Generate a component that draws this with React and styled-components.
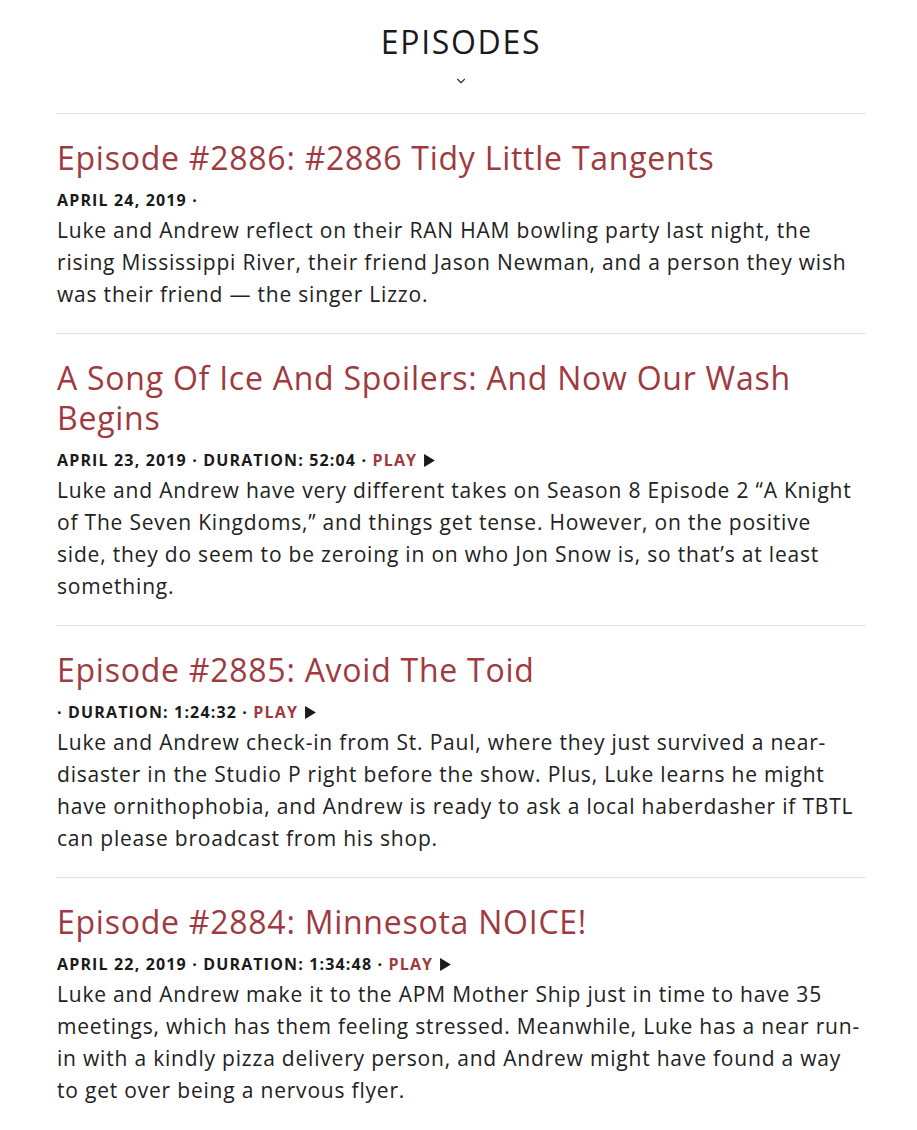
import React from "react";
import styled, { createGlobalStyle } from "styled-components";
import { ChevronDown } from "lucide-react";

const RED = "#9e3a40";

const episodes = [
  {
    title: "Episode #2886: #2886 Tidy Little Tangents",
    date: "APRIL 24, 2019",
    duration: null,
    text: "Luke and Andrew reflect on their RAN HAM bowling party last night, the rising Mississippi River, their friend Jason Newman, and a person they wish was their friend — the singer Lizzo.",
  },
  {
    title: "A Song Of Ice And Spoilers: And Now Our Wash Begins",
    date: "APRIL 23, 2019",
    duration: "52:04",
    text: "Luke and Andrew have very different takes on Season 8 Episode 2 “A Knight of The Seven Kingdoms,” and things get tense. However, on the positive side, they do seem to be zeroing in on who Jon Snow is, so that’s at least something.",
  },
  {
    title: "Episode #2885: Avoid The Toid",
    date: "",
    duration: "1:24:32",
    text: "Luke and Andrew check-in from St. Paul, where they just survived a near-disaster in the Studio P right before the show. Plus, Luke learns he might have ornithophobia, and Andrew is ready to ask a local haberdasher if TBTL can please broadcast from his shop.",
  },
  {
    title: "Episode #2884: Minnesota NOICE!",
    date: "APRIL 22, 2019",
    duration: "1:34:48",
    text: "Luke and Andrew make it to the APM Mother Ship just in time to have 35 meetings, which has them feeling stressed. Meanwhile, Luke has a near run-in with a kindly pizza delivery person, and Andrew might have found a way to get over being a nervous flyer.",
  },
];

function App() {
  return (
    <Page>
      <GlobalStyle />
      <Header>
        <Heading>EPISODES</Heading>
        <Toggle>
          <ChevronDown size={14} strokeWidth={2} />
        </Toggle>
      </Header>
      <List>
        {episodes.map((ep) => (
          <Episode key={ep.title}>
            <Title>{ep.title}</Title>
            <Meta>
              {ep.date} ·
              {ep.duration && (
                <>
                  {" "}DURATION: {ep.duration} · <Play>PLAY</Play>
                  <Arrow viewBox="0 0 10 12">
                    <path d="M0 0 L10 6 L0 12 Z" />
                  </Arrow>
                </>
              )}
            </Meta>
            <Text>{ep.text}</Text>
          </Episode>
        ))}
      </List>
    </Page>
  );
}
export default App;

const GlobalStyle = createGlobalStyle`
  body {
    margin: 0;
    background: #fff;
    color: #222;
    font-family: "Open Sans", "Liberation Sans", sans-serif;
  }
`;

const Page = styled.div`
  padding: 0 51px 0 56px;
`;

const Header = styled.header`
  display: flex;
  flex-direction: column;
  align-items: center;
  padding-top: 22px;
  height: 113px;
  box-sizing: border-box;
`;

const Heading = styled.h1`
  margin: 0;
  font-size: 32px;
  line-height: 40px;
  font-weight: 400;
  letter-spacing: 1.7px;
  color: #1a1a1a;
`;

const Toggle = styled.div`
  display: flex;
  margin-top: 12px;
  color: #333;
`;

const List = styled.div``;

const Episode = styled.article`
  border-top: 1px solid #e2e2e2;
  padding: 24px 0 23px 1px;
`;

const Title = styled.h2`
  margin: 0;
  font-size: 32px;
  line-height: 40px;
  font-weight: 400;
  letter-spacing: 0.75px;
  color: ${RED};
`;

const Meta = styled.div`
  margin: 10px 0 2px;
  font-size: 16px;
  line-height: 24px;
  font-weight: 700;
  letter-spacing: 1.15px;
  color: #1a1a1a;
`;

const Play = styled.span`
  color: ${RED};
`;

const Arrow = styled.svg`
  width: 11px;
  height: 13px;
  margin-left: 7px;
  vertical-align: -1px;
  fill: #1a1a1a;
`;

const Text = styled.p`
  margin: 0;
  font-size: 21px;
  line-height: 32px;
  letter-spacing: 0.8px;
  color: #222;
`;
